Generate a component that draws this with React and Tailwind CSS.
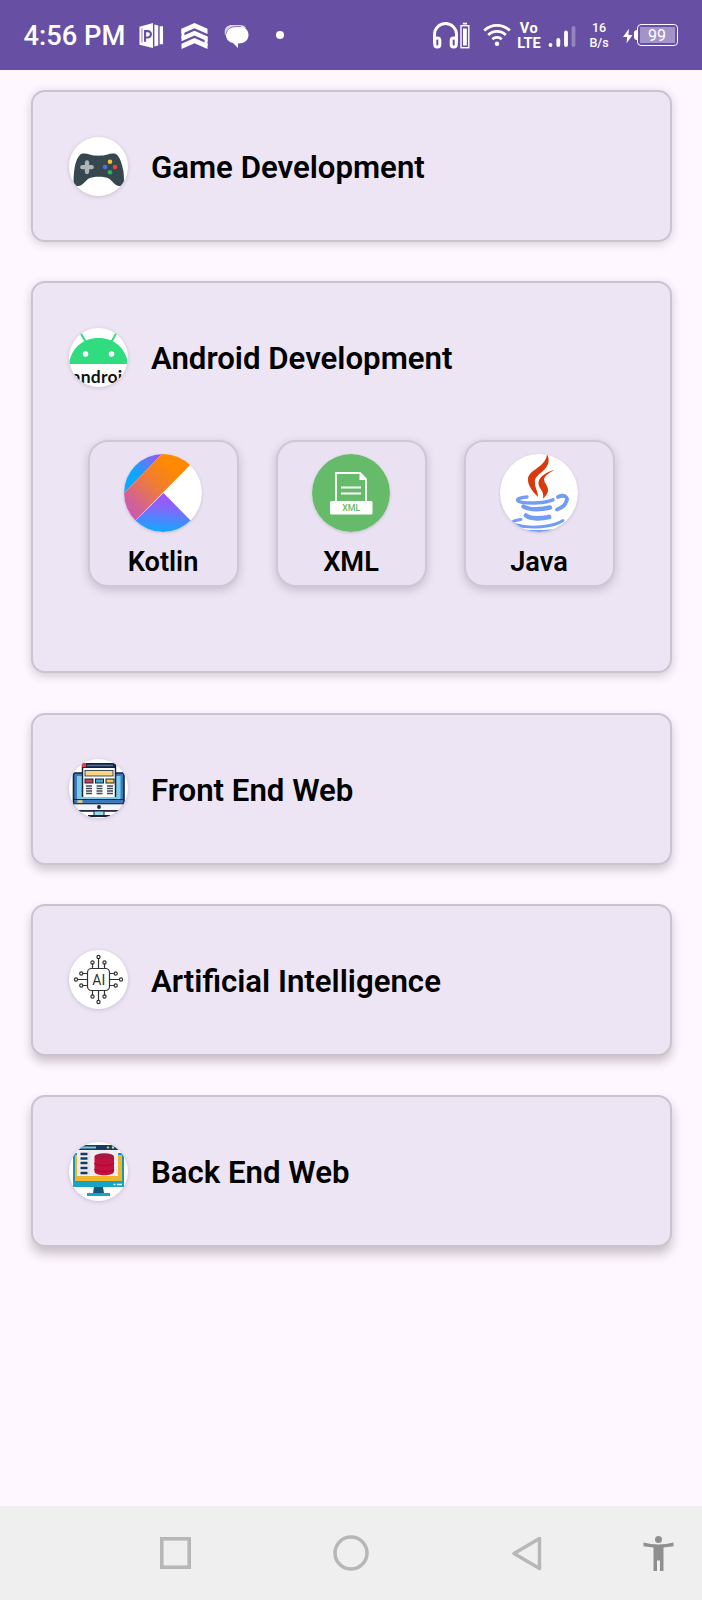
import React from "react";

function StatusBar() {
  return (
    <header className="flex h-[70px] items-center bg-[#6750a3] pl-[23.500px] text-white">
      <span className="w-[115.500px] whitespace-nowrap pt-[4px] text-[27.300px] font-medium leading-none">4:56 PM</span>
      <svg className="h-[25px] w-[25px] shrink-0" viewBox="0 0 25 26">
        <path d="M0 4l14-4v26L0 22.500z" fill="white" />
        <path d="M1.500 5.500h2v15h-2z" fill="#6750a3" opacity=".4" />
        <path d="M5.800 19.500V8.500h2.800a3.300 3.300 0 0 1 0 6.600H6" fill="none" stroke="#6750a3" strokeWidth="2.200" />
        <path d="M15.500 1.500l4 1v21l-4 1zM21 3.500h3.500V22H21z" fill="white" />
      </svg>
      <svg className="ml-[17px] mt-[1px] h-[26px] w-[27px] shrink-0" viewBox="0 0 27 27" fill="white">
        <path d="M0 6L13.500 0 27 6v5.500L13.500 5.500 0 11.500z" />
        <path d="M0 14L13.500 8 27 14v5L13.500 13 0 19z" />
        <path d="M0 21.500l13.500-6L27 21.500V27l-13.500-6L0 27z" />
        <path d="M0 6h3v10H0zM24 14h3v10h-3z" />
      </svg>
      <svg className="ml-[16px] mt-[2px] h-[25px] w-[26px] shrink-0" viewBox="0 0 26 25">
        <path d="M1 11C-.5 4 3 1 8 1h8c3 0 5 1 6 3" fill="white" opacity=".75" />
        <path d="M12 3h4c5.500 0 8.500 3.500 8.500 8 0 5-4 8.500-10.500 8.500V24l-5-5C4.500 18 2 15 2 11c0-5 4-8 10-8z" fill="white" />
        <path d="M2 10C3 5 7 2.600 12 2.600h5" fill="none" stroke="#6750a3" strokeWidth=".7" />
      </svg>
      <span className="ml-[26px] h-[8px] w-[8px] shrink-0 rounded-full bg-white" />
      <svg className="ml-[148.500px] mt-[1px] h-[27px] w-[37px] shrink-0" viewBox="0 0 37 27" fill="none" stroke="white">
        <path d="M1.500 21V12.500a11 11 0 0 1 22 0V21" strokeWidth="2.900" />
        <rect x="1.800" y="16" width="5" height="9" rx="2.300" strokeWidth="3" />
        <rect x="18.200" y="16" width="5" height="9" rx="2.300" strokeWidth="3" />
        <rect x="28" y="3.700" width="7.800" height="22" strokeWidth="1.400" />
        <path d="M29.800 1.600h4.200" strokeWidth="1.800" />
        <path d="M31.900 6.500v17" strokeWidth="3.800" />
      </svg>
      <svg className="ml-[13px] h-[24px] w-[28px] shrink-0" viewBox="0 0 28 24" fill="none" stroke="white" strokeWidth="2.700">
        <path d="M1.200 7.500a18.500 18.500 0 0 1 25.600 0M5.200 12a12.500 12.500 0 0 1 17.600 0M9.300 16.200a6.900 6.900 0 0 1 9.400 0" />
        <circle cx="14" cy="20.700" r="2.200" fill="white" stroke="none" />
      </svg>
      <span className="ml-[5px] flex w-[27px] flex-col items-center whitespace-nowrap pt-[1px] text-center text-[14.500px] font-bold leading-[15px]">
        <span className="tracking-[0.5px]">Vo</span><span>LTE</span>
      </span>
      <svg className="ml-[5.500px] mt-[3px] h-[22px] w-[28px] shrink-0" viewBox="0 0 28 22" strokeWidth="3.800" stroke="white" strokeLinecap="round">
        <path d="M2.500 19v.100M10.300 14v5M18 6.500V19" />
        <path d="M25.500 2v17" opacity=".3" />
      </svg>
      <span className="ml-[12px] flex w-[22px] flex-col items-center whitespace-nowrap text-[12.500px] font-medium leading-[15px]">
        <span>16</span><span>B/s</span>
      </span>
      <svg className="ml-[12.500px] mt-[1px] h-[16px] w-[10px] shrink-0" viewBox="0 0 11 16" fill="white"><path d="M6.500 0L0 9h4.500L4 16l6.500-9H6z" /></svg>
      <span className="ml-[1.500px] h-[10px] w-[2.500px] shrink-0 rounded-l bg-white" />
      <span className="flex h-[22px] w-[41px] shrink-0 items-center rounded-[4px] border-[1.500px] border-white p-[2px]">
        <span className="flex h-full w-full items-center justify-center bg-[#a293c8] pt-[1px] text-[16px] font-normal leading-none">99</span>
      </span>
    </header>
  );
}

function GameIcon() {
  return (
    <svg viewBox="0 0 59 59" className="h-full w-full">
      <path d="M12 17c3-.8 6-.5 8.500.6 5 1.600 13 1.600 18 0 2.500-1.100 5.500-1.400 8.500-.6 4 3 6 10 7.400 17 .6 5 .8 9 .4 13-.5 2-2.500 2.300-6 1.800-3.500-1.300-5-4.500-9-7.300-4-2.300-16-2.300-20 0-4 2.800-5.500 6-9 7.300-3.500.5-5.500.2-6-1.800-.4-4-.2-8 .4-13C6 27 8 20 12 17z" fill="#37474f" />
      <path d="M18 25.500v9.500M13.300 30.200h9.400" stroke="#aeb4b8" strokeWidth="4.300" strokeLinecap="round" />
      <circle cx="41" cy="24.800" r="2.300" fill="#fbc02d" />
      <circle cx="46" cy="30" r="2.300" fill="#e64a35" />
      <circle cx="36" cy="30" r="2.300" fill="#536dde" />
      <circle cx="41" cy="35.300" r="2.300" fill="#28b463" />
    </svg>
  );
}

function AndroidIcon() {
  return (
    <svg viewBox="0 0 59 59" className="h-full w-full">
      <path d="M0 36C2 20 14 10 29.500 10S57 20 59 36z" fill="#30dc80" />
      <path d="M11.500 5l5 8.500M47.500 5l-5 8.500" stroke="#30dc80" strokeWidth="2" />
      <circle cx="16.500" cy="26" r="2.800" fill="white" />
      <circle cx="42.500" cy="26" r="2.800" fill="white" />
      <text x="2.500" y="54.600" textLength="61" lengthAdjust="spacing" fontFamily="Lato" fontWeight="700" fontSize="17.500" fill="#111">android</text>
    </svg>
  );
}

function FrontEndIcon() {
  return (
    <svg viewBox="0 0 59 59" className="h-full w-full">
      <rect x="4.500" y="14" width="50.500" height="38" rx="1.500" fill="#3c79bd" stroke="#17223b" strokeWidth="1.600" />
      <path d="M8 17h43.500v23H8z" fill="#78cdeb" />
      <path d="M5 45h49.500v6.500H5z" fill="#f4f5f8" />
      <path d="M5 40.500h49.500M5 44.800h49.500" stroke="#17223b" strokeWidth="1" />
      <path d="M8.500 42.600h5" stroke="#f8ce72" strokeWidth="2.500" />
      <path d="M13.500 38V5h33v33z" fill="white" />
      <path d="M13.500 38V5M46.500 38V5" stroke="#17223b" strokeWidth="1.500" />
      <path d="M13 4h34v5H13z" fill="#17223b" />
      <path d="M18 6.500h26" stroke="#3c79bd" strokeWidth="1.500" />
      <path d="M13 4h4v4h-4z" fill="#d93f54" />
      <rect x="16" y="11.500" width="28" height="5.500" fill="#f9d680" stroke="#17223b" strokeWidth=".8" />
      <rect x="16" y="20" width="8" height="4" fill="#ce3d58" stroke="#17223b" />
      <rect x="26.500" y="20" width="8" height="4" fill="#42a9d5" stroke="#17223b" />
      <rect x="37" y="20" width="8" height="4" fill="#f7c64a" stroke="#17223b" />
      <path d="M17 27h6M17 29.500h6M17 32h6M17 34.500h6M27.500 27h6M27.500 29.500h6M27.500 32h6M27.500 34.500h6M38 27h6M38 29.500h6M38 32h6M38 34.500h6" stroke="#424858" strokeWidth="1.300" />
      <path d="M5 51.600h49.500" stroke="#17223b" strokeWidth="1" />
      <circle cx="30" cy="48" r="1.900" fill="#17223b" />
      <path d="M25 52h10v5H25z" fill="#9bd8ed" stroke="#17223b" />
      <path d="M19 57h22" stroke="#17223b" strokeWidth="2" />
    </svg>
  );
}

function AiIcon() {
  return (
    <svg viewBox="0 0 59 59" className="h-full w-full" fill="none" stroke="#333" strokeWidth="1.200">
      <rect x="18.500" y="18.500" width="22" height="22" rx="4" />
      <path d="M29.500 18.500V8.500M29.500 40.500v10M18.500 29.500h-10M40.500 29.500h10M23.500 18.500v-5M35.500 18.500v-5M23.500 40.500v5M35.500 40.500v5M18.500 23.500h-5M18.500 35.500h-5M40.500 23.500h5M40.500 35.500h5" />
      <g>
        <circle cx="29.500" cy="7" r="1.600" /><circle cx="29.500" cy="52" r="1.600" />
        <circle cx="7" cy="29.500" r="1.600" /><circle cx="52" cy="29.500" r="1.600" />
        <circle cx="23.500" cy="12.500" r="1.600" /><circle cx="35.500" cy="12.500" r="1.600" />
        <circle cx="23.500" cy="46.500" r="1.600" /><circle cx="35.500" cy="46.500" r="1.600" />
        <circle cx="12.300" cy="23.500" r="1.600" /><circle cx="12.300" cy="35.500" r="1.600" />
        <circle cx="46.700" cy="23.500" r="1.600" /><circle cx="46.700" cy="35.500" r="1.600" />
      </g>
      <text x="29.800" y="34.600" textAnchor="middle" fontFamily="Roboto" fontSize="14" fill="#333" stroke="none">AI</text>
    </svg>
  );
}

function BackEndIcon() {
  return (
    <svg viewBox="0 0 59 59" className="h-full w-full">
      <path d="M4 11h51v34H4z" fill="#1795ba" />
      <path d="M6 13h47v26H6z" fill="#efb52b" />
      <path d="M4 39.500h51V45H4z" fill="#18a4c2" />
      <path d="M8 4h41v30H8z" fill="#f0edf0" />
      <path d="M8 3h42v5H8z" fill="#133d60" />
      <path d="M9 5.500h18" stroke="#7fc7d7" strokeWidth="2" />
      <circle cx="39" cy="5.500" r="1.200" fill="#efb52b" /><circle cx="44" cy="5.500" r="1.200" fill="#bfd7e2" />
      <path d="M20 9v24" stroke="#dbd6df" />
      <path d="M11.500 12h7M11.500 16.500h7M11.500 21h7M11.500 26h7M11.500 31h7" stroke="#133d60" strokeWidth="2.300" />
      <path d="M25.500 14.500v15c0 5 19.500 5 19.500 0v-15z" fill="#c4103f" />
      <ellipse cx="35.250" cy="14.500" rx="9.750" ry="3.300" fill="#a71943" />
      <path d="M25.500 21c1 3.500 18.500 3.500 19.500 0M25.500 27c1 3.500 18.500 3.500 19.500 0" fill="none" stroke="#a20d3a" strokeWidth="1.200" />
      <path d="M44.500 42.500h2M48 42.500h5" stroke="#dff" strokeWidth="1.500" />
      <path d="M25 45h9l1 6H24z" fill="#13577d" />
      <path d="M18 51h23v3H18z" fill="#18a4c2" />
    </svg>
  );
}

function KotlinIcon() {
  return (
    <svg viewBox="0 0 78 78" className="h-full w-full">
      <defs>
        <linearGradient id="kBlue" x1="0" y1="35" x2="38" y2="0" gradientUnits="userSpaceOnUse">
          <stop offset=".35" stopColor="#09a9ff" /><stop offset="1" stopColor="#a650f5" />
        </linearGradient>
        <linearGradient id="kOrange" x1="0" y1="65" x2="48" y2="14" gradientUnits="userSpaceOnUse">
          <stop offset="0" stopColor="#c757bc" /><stop offset=".25" stopColor="#d0609a" /><stop offset=".65" stopColor="#ef7c38" /><stop offset="1" stopColor="#ff8900" />
        </linearGradient>
        <linearGradient id="kBottom" x1="40" y1="39" x2="37" y2="78" gradientUnits="userSpaceOnUse">
          <stop offset="0" stopColor="#a54ff8" /><stop offset=".4" stopColor="#8069fb" /><stop offset="1" stopColor="#10a8ff" />
        </linearGradient>
      </defs>
      <path d="M0 0h38L0 39z" fill="url(#kBlue)" />
      <path d="M38 0h39L0 78V39z" fill="url(#kOrange)" />
      <path d="M39.500 39L78 78H0z" fill="url(#kBottom)" />
    </svg>
  );
}

function XmlIcon() {
  return (
    <svg viewBox="0 0 78 78" className="h-full w-full">
      <path d="M0 0h78v78H0z" fill="#66bb6a" />
      <path d="M24 48V19h24l6 6v23" fill="none" stroke="white" strokeWidth="1.800" />
      <path d="M47.500 18.500V26H55z" fill="white" />
      <path d="M29 33.500h20M29 39.500h20" stroke="white" strokeWidth="1.900" />
      <rect x="18" y="47" width="42.500" height="13.500" rx="1.500" fill="white" />
      <text x="39.200" y="56.800" textAnchor="middle" fontFamily="Roboto" fontWeight="500" fontSize="8.800" fill="#66bb6a">XML</text>
    </svg>
  );
}

function JavaIcon() {
  return (
    <svg viewBox="0 0 78 78" className="h-full w-full">
      <path d="M47 0c4 8 0 13-4 17-5 4-9 7-8 12 0 5 3 8 3 14-5-5-11-12-10-19 2-9 18-11 19-24z" fill="#d73a0d" />
      <path d="M54 16c-5 3-10 6-10 10 1 4 4 6 4 10 0 4-3 6-5 9 1-6-1-8-3-11-5-9 4-15 14-18z" fill="#d73a0d" />
      <g fill="none" stroke="#739df3" strokeLinecap="round">
        <path d="M27 43c-11 1-12 4-5 5.300 9 1.500 23 .7 31-2.500" strokeWidth="3.400" />
        <path d="M58 43c6-3 11 0 8 5-1 4-5 6-9 7.500" strokeWidth="3.800" />
        <path d="M23.500 52.500c6 4 19 3 26.500 1" strokeWidth="4.400" />
        <path d="M26 61.500c5 4 17 3 23 1.500" strokeWidth="4.800" />
        <path d="M21 65.500c-9 1-12 4-5 5.500 14 4 38 2 47-4.500" strokeWidth="2.900" />
      </g>
      <path d="M15 75c15 1.500 34 1.500 49-1V78H15z" fill="#739df3" />
    </svg>
  );
}

const technologies = [
  { name: "Kotlin", Icon: KotlinIcon },
  { name: "XML", Icon: XmlIcon },
  { name: "Java", Icon: JavaIcon },
];

const courses = [
  { name: "Game Development", Icon: GameIcon, shadow: "shadow-[0_2px_10px_rgba(60,40,50,0.2)]" },
  { name: "Android Development", Icon: AndroidIcon, shadow: "shadow-[0_3px_10px_rgba(60,40,50,0.22)]", items: technologies },
  { name: "Front End Web", Icon: FrontEndIcon, shadow: "shadow-[0_5px_10px_rgba(60,40,50,0.24)]" },
  { name: "Artificial Intelligence", Icon: AiIcon, shadow: "shadow-[0_6px_10px_rgba(60,40,50,0.25)]" },
  { name: "Back End Web", Icon: BackEndIcon, shadow: "shadow-[0_7px_11px_rgba(60,40,50,0.27)]" },
];

function TechnologyCard({ name, Icon }) {
  return (
    <div className="flex h-[147px] w-[151px] flex-col items-center rounded-[20px] border-2 border-[#cfc7d6] bg-[#eae2f2] pt-[12px] shadow-[0_3px_10px_rgba(60,40,70,0.22)]">
      <div className="h-[78px] w-[78px] overflow-hidden rounded-full bg-white shadow-[0_1px_3px_rgba(60,40,70,0.2)]"><Icon /></div>
      <span className="mt-[14.500px] text-[27.200px] font-semibold leading-[32px]">{name}</span>
    </div>
  );
}

function CourseCard({ name, Icon, shadow, items }) {
  return (
    <section className={`rounded-[14px] border-2 border-[#cbc4d0] bg-[#ede5f4] pl-[36.500px] pt-[44.500px] ${shadow} ${items ? "h-[392px]" : "h-[152px]"}`}>
      <div className="flex h-[59px] items-center">
        <div className="h-[59px] w-[59px] overflow-hidden rounded-full bg-white shadow-[0_1px_4px_rgba(60,40,70,0.2)]"><Icon /></div>
        <h2 className="ml-[23px] pt-[4px] text-[31.200px] font-semibold leading-[36px]">{name}</h2>
      </div>
      {items && <div className="ml-[18.500px] mt-[53px] flex gap-[37px]">{items.map((item) => <TechnologyCard key={item.name} {...item} />)}</div>}
    </section>
  );
}

function NavigationBar() {
  return (
    <nav className="flex h-[94px] items-center bg-[#efefef] pl-[160px]">
      <svg className="h-[32px] w-[31px]" viewBox="0 0 31 32"><rect x="1.800" y="1.800" width="27.400" height="28.400" fill="none" stroke="#b7b7b7" strokeWidth="3.600" /></svg>
      <svg className="ml-[142px] h-[36px] w-[36px]" viewBox="0 0 36 36"><circle cx="18" cy="18" r="16" fill="none" stroke="#b7b7b7" strokeWidth="3.500" /></svg>
      <svg className="ml-[143px] h-[35px] w-[30px]" viewBox="0 0 30 35"><path d="M27.500 2.500v30L2 17.500z" fill="none" stroke="#b7b7b7" strokeWidth="3.500" strokeLinejoin="round" /></svg>
      <svg className="ml-[100.500px] h-[35px] w-[31px]" viewBox="0 0 31 35" fill="#8f8f8f"><circle cx="15.500" cy="3.500" r="3.500" /><path d="M.500 6.500c9.500 2.500 20.500 2.500 30 0v3.700l-10 1.400V35H17V24.500h-3V35h-3.500V11.600l-10-1.400z" /></svg>
    </nav>
  );
}

export default function App() {
  return (
    <div className="flex h-[1600px] w-[702px] flex-col overflow-hidden bg-[#fef7ff] font-['Roboto',sans-serif] text-black">
      <StatusBar />
      <main className="flex flex-1 flex-col gap-[39.300px] pl-[30.500px] pr-[30.500px] pt-[20px]">
        {courses.map((course) => <CourseCard key={course.name} {...course} />)}
      </main>
      <NavigationBar />
    </div>
  );
}
